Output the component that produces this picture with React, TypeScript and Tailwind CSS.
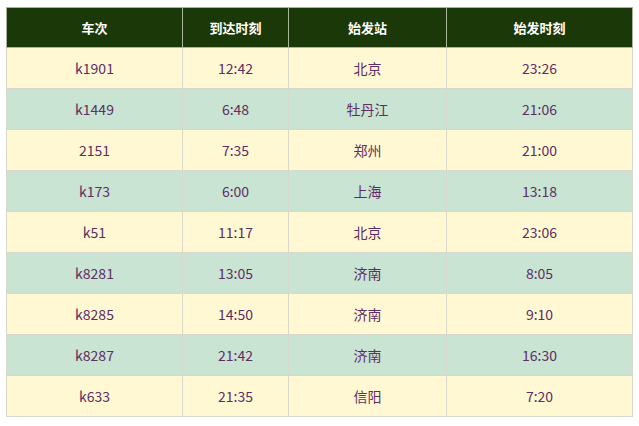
const rows = [
  ['k1901', '12:42', '北京', '23:26'],
  ['k1449', '6:48', '牡丹江', '21:06'],
  ['2151', '7:35', '郑州', '21:00'],
  ['k173', '6:00', '上海', '13:18'],
  ['k51', '11:17', '北京', '23:06'],
  ['k8281', '13:05', '济南', '8:05'],
  ['k8285', '14:50', '济南', '9:10'],
  ['k8287', '21:42', '济南', '16:30'],
  ['k633', '21:35', '信阳', '7:20'],
]

const headers = ['车次', '到达时刻', '始发站', '始发时刻']
const widths = ['w-[176px]', 'w-[106px]', 'w-[158px]', 'w-[186px]']

export default function App() {
  return (
    <div className="w-[639px] h-[426px] bg-white pt-[7px] pl-[6px] font-['Noto_Sans_CJK_SC','Noto_Sans',sans-serif]">
      <table className="w-[626px] border-collapse table-fixed border border-[#d6d6c8]">
        <thead>
          <tr className="h-[40px] bg-[#1b3808]">
            {headers.map((h, i) => (
              <th
                key={h}
                className={`${widths[i]} border border-[#a9b49a] text-white text-[13px] font-bold text-center`}
              >
                {h}
              </th>
            ))}
          </tr>
        </thead>
        <tbody>
          {rows.map((r, ri) => (
            <tr key={ri} className={`h-[41px] ${ri % 2 === 0 ? 'bg-[#fff8d3]' : 'bg-[#c9e4d2]'}`}>
              {r.map((c, ci) => (
                <td
                  key={ci}
                  className="border border-[#d8d8cc] text-center text-[14px] text-[#5e2d62]"
                >
                  {c}
                </td>
              ))}
            </tr>
          ))}
        </tbody>
      </table>
    </div>
  )
}
